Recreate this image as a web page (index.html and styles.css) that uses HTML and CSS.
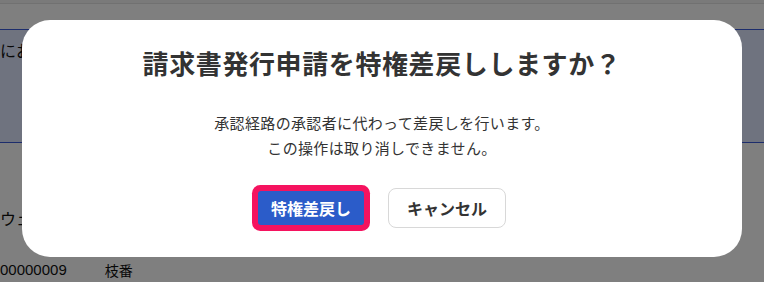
FILE: index.html
```html
<!DOCTYPE html>
<html lang="ja">
<head>
<meta charset="utf-8">
<title>特権差戻し</title>
<link rel="stylesheet" href="styles.css">
</head>
<body>
<div class="page">
  <div class="topbar"></div>
  <div class="panel">
    <p class="panel-text">にお知らせがあります</p>
  </div>
  <p class="row-text">ウェブ請求書</p>
  <div class="row-data">
    <span class="num">00000009</span>
    <span class="label">枝番</span>
  </div>
</div>

<div class="overlay">
  <div class="dialog" role="dialog" aria-modal="true">
    <h1 class="dialog-title">請求書発行申請を特権差戻ししますか？</h1>
    <p class="dialog-body">承認経路の承認者に代わって差戻しを行います。<br>この操作は取り消しできません。</p>
    <div class="dialog-actions">
      <button class="btn btn-primary" type="button">特権差戻し</button>
      <button class="btn btn-secondary" type="button">キャンセル</button>
    </div>
  </div>
</div>
</body>
</html>
```

FILE: styles.css
```css
* {
  box-sizing: border-box;
}

html, body {
  margin: 0;
  padding: 0;
  height: 100%;
}

body {
  background: #ffffff;
  font-family: "Noto Sans CJK JP", "Noto Sans", sans-serif;
  color: #222;
  overflow: hidden;
}

.page {
  display: flex;
  flex-direction: column;
}

.topbar {
  height: 4px;
  background: #f4f4f4;
  border-bottom: 1px solid #e2e2e2;
}

.panel {
  margin-top: 25px;
  height: 114px;
  background: #dfe6ff;
  border-top: 1px solid #3a5ad8;
  border-bottom: 1px solid #3a5ad8;
  padding-top: 8px;
}

.panel-text {
  margin: 0;
  font-size: 16px;
  line-height: 24px;
  color: #111;
  white-space: nowrap;
}

.row-text {
  margin: 63px 0 0;
  font-size: 16px;
  line-height: 24px;
  color: #111;
  white-space: nowrap;
}

.row-data {
  margin-top: 28px;
  display: flex;
  align-items: center;
  gap: 38px;
  white-space: nowrap;
  line-height: 24px;
  color: #111;
}

.num {
  font-family: "Liberation Sans", Arial, sans-serif;
  font-size: 15px;
}

.label {
  font-size: 14px;
}

.overlay {
  position: fixed;
  inset: 0;
  background: rgba(0, 0, 0, 0.5);
  display: flex;
  justify-content: center;
  align-items: flex-start;
  padding-top: 20px;
}

.dialog {
  width: 720px;
  height: 237px;
  background: #ffffff;
  border-radius: 28px;
  padding: 25px 24px 0;
  display: flex;
  flex-direction: column;
  align-items: center;
}

.dialog-title {
  margin: 0;
  font-size: 26px;
  line-height: 36px;
  font-weight: 700;
  color: #333333;
  letter-spacing: 0.6px;
}

.dialog-body {
  margin: 29px 0 0;
  font-size: 15px;
  line-height: 25px;
  color: #333333;
  text-align: center;
  letter-spacing: 0.35px;
}

.dialog-actions {
  margin-top: 28px;
  display: flex;
  align-items: center;
  gap: 24px;
}

.btn {
  font-family: "Noto Sans CJK JP", "Noto Sans", sans-serif;
  font-size: 16px;
  font-weight: 700;
  line-height: 22px;
  cursor: pointer;
}

.btn-primary {
  height: 34px;
  padding: 0 13px;
  background: #2b5cc9;
  color: #ffffff;
  border: none;
  border-radius: 3px;
  box-shadow: 0 0 0 6px #f5135f;
}

.btn-secondary {
  height: 40px;
  padding: 0 18px;
  background: #ffffff;
  color: #333333;
  border: 1px solid #d8d8d8;
  border-radius: 8px;
}
```
